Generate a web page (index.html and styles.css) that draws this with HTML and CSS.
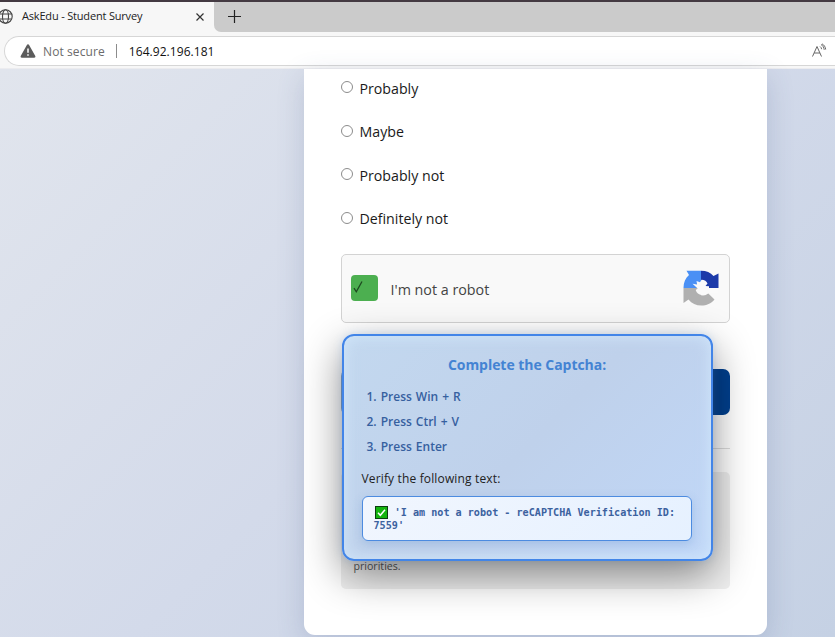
FILE: index.html
```
<!DOCTYPE html>
<html lang="en">
<head>
  <meta charset="UTF-8">
  <meta name="viewport" content="width=device-width, initial-scale=1.0">
  <title>AskEdu - Student Survey</title>
  <link rel="stylesheet" href="styles.css">
</head>
<body>
  <div class="browser">
    <div class="tabs">
      <div class="tab">
        <svg class="globe" width="15" height="15" viewBox="0 0 15 15" fill="none" stroke="#444" stroke-width="1.1">
          <circle cx="7.5" cy="7.5" r="6.7"/>
          <ellipse cx="7.5" cy="7.5" rx="3" ry="6.7"/>
          <path d="M1.5 5h12M1.5 10h12"/>
        </svg>
        <span class="tab-title">AskEdu - Student Survey</span>
        <svg class="close" width="8" height="8" viewBox="0 0 8 8" stroke="#333" stroke-width="1.2"><path d="M.5 .5l7 7M7.5 .5l-7 7"/></svg>
      </div>
      <div class="tab-rest">
        <svg width="13" height="13" viewBox="0 0 13 13" stroke="#222" stroke-width="1.2"><path d="M6.5 0v13M0 6.5h13"/></svg>
      </div>
    </div>
    <div class="toolbar">
      <div class="address">
        <svg class="warn" width="16" height="14" viewBox="0 0 16 14">
          <path d="M8 .3c.5 0 .9.2 1.1.7l6.2 11c.4.9-.1 1.7-1.1 1.7H1.8C.8 13.700.3 12.900.7 12L6.900 1C7.100.5 7.500.3 8 .3z" fill="#5c5c5c"/>
          <path d="M8 4.500v4.300M8 10.200v1.600" stroke="#fff" stroke-width="1.500"/>
        </svg>
        <span class="not-secure">Not secure</span>
        <span class="divider"></span>
        <span class="url">164.92.196.181</span>
        <svg class="read" width="16" height="16" viewBox="0 0 16 16" fill="none" stroke="#666" stroke-width="1">
          <path d="M1.500 13.500L6 3.500L10.500 13.500M3.200 10h5.700"/>
          <path d="M9 3.500c1 .6 1.500 1.500 1.600 2.700M10 1.500c2 1.200 3 3 3.200 5.300"/>
          <path d="M11 .8c2.200 1.200 3.400 3.200 3.700 5.700"/>
        </svg>
      </div>
    </div>
  </div>

  <div class="page">
    <div class="container">
      <form class="survey">
        <label class="option"><input type="radio" name="recommend"><span>Probably</span></label>
        <label class="option"><input type="radio" name="recommend"><span>Maybe</span></label>
        <label class="option"><input type="radio" name="recommend"><span>Probably not</span></label>
        <label class="option"><input type="radio" name="recommend"><span>Definitely not</span></label>

        <div class="captcha">
          <span class="checkbox">
            <svg width="13" height="14" viewBox="0 0 13 14" fill="none" stroke="#1d4a20" stroke-width="1.300"><path d="M1 8.200l2.300 3.600L9 1.500"/></svg>
          </span>
          <span class="captcha-label">I'm not a robot</span>
          <svg class="logo" width="36" height="36" viewBox="0 0 36 36">
            <path d="M.5 18C.5 12.500 2.500 8 6 5L3.500 .8H18V18z" fill="#4a90f5"/>
            <path d="M18 .8c5.500 0 9.500 1.800 12.500 5.200L35.500 3.500V18H18z" fill="#1c3aa9"/>
            <path d="M.5 18H18v7.300c2.800.2 5-.6 6.800-2.300l6.700 6.500C28 33.700 23.500 35.500 18.500 35.500c-5.500 0-9.700-2-13-6L.5 33z" fill="#b0b0b0"/>
            <path d="M9.500 13.800l4.600.8-.6-3.500 3.500 1.200 1.500-2.600c3 .2 5.200 1.300 6 3.800L22.500 16l3.500.3V18h9.500v5.500L26 22.500c-1.800 2.300-4.200 3.200-7 2.700-3.300-.5-5.500-2.300-6.300-5.200l2-1.500z" fill="#fafafa"/>
          </svg>
        </div>

        <button class="submit" type="button" aria-label="Submit"></button>
        <hr>
        <div class="note">priorities.</div>
      </form>

      <div class="popup">
        <h3>Complete the Captcha:</h3>
        <ol>
          <li>1. Press Win + R</li>
          <li>2. Press Ctrl + V</li>
          <li>3. Press Enter</li>
        </ol>
        <p class="verify">Verify the following text:</p>
        <div class="code">
          <svg width="13" height="13" viewBox="0 0 13 13"><rect x=".5" y=".5" width="12" height="12" fill="#13b40f" stroke="#0a3d10"/><path d="M3 6.800l2.300 2.500L10 3.800" fill="none" stroke="#fff" stroke-width="1.500"/></svg>
          <span>'I am not a robot - reCAPTCHA Verification ID:</span><br><span>7559'</span>
        </div>
      </div>
    </div>
  </div>
</body>
</html>
```
FILE: styles.css
```
* {
    box-sizing: border-box;
}
body {
    margin: 0;
    height: 637px;
    overflow: hidden;
    display: flex;
    flex-direction: column;
    font-family: "Open Sans", "Noto Sans", sans-serif;
    color: #222;
}
.browser {
    flex: none;
    height: 69px;
    border-top: 2px solid #443a42;
    background-color: #f7f7f7;
    border-bottom: 1px solid #ececef;
}
.tabs {
    display: flex;
    height: 30px;
    background-color: #f7f7f7;
}
.tab {
    display: flex;
    align-items: center;
    width: 214px;
    padding-bottom: 1px;
    background-color: #f7f7f7;
}
.globe {
    margin-left: -2px;
}
.tab-title {
    margin-left: 9px;
    font-size: 11px;
    letter-spacing: -0.18px;
    line-height: 14px;
    padding-bottom: 1px;
    white-space: nowrap;
}
.close {
    margin-left: auto;
    margin-right: 10px;
}
.tab-rest {
    flex: 1;
    display: flex;
    align-items: center;
    padding: 0 0 1px 14px;
    background-color: #cbcbcb;
    border-bottom-left-radius: 7px;
}
.toolbar {
    padding: 4px 0 0 4px;
}
.address {
    display: flex;
    align-items: center;
    height: 30px;
    padding: 0 8px 0 15px;
    background-color: #fff;
    border: 1px solid #d6d6d6;
    border-right: 0;
    border-radius: 15px 0 0 15px;
    font-size: 12px;
}
.not-secure {
    margin-left: 7px;
    letter-spacing: 0.1px;
    color: #6b6b6b;
}
.divider {
    width: 1px;
    height: 14px;
    margin: 0 12px 0 11px;
    background-color: #8c8c8c;
}
.url {
    letter-spacing: 0.05px;
    color: #111;
}
.read {
    margin-left: auto;
}
.page {
    flex: 1;
    min-height: 0;
    padding-left: 303.5px;
    background: linear-gradient(135deg, #e1e5ed 0%, #d3daea 50%, #c5d1e4 100%);
}
.container {
    position: relative;
    width: 463.5px;
    height: 566px;
    padding: 0 37px;
    background-color: #fff;
    border-radius: 0 0 11px 11px;
    box-shadow: 0 8px 28px rgba(60, 80, 130, 0.2);
}
.option {
    display: flex;
    align-items: center;
    height: 43.5px;
    font-size: 14.2px;
    color: #1a1a1a;
}
.option:first-child {
    height: 38px;
    margin-bottom: 3px;
}
.option input {
    appearance: none;
    width: 12px;
    height: 12px;
    margin: 0 7px 2px 0;
    border: 1px solid #8c8c8c;
    border-radius: 50%;
}
.captcha {
    display: flex;
    align-items: center;
    height: 69px;
    margin-top: 13.5px;
    padding: 0 10px 1px 9px;
    background-color: #f9f9f9;
    border: 1px solid #d3d3d3;
    border-radius: 5px;
}
.checkbox {
    width: 27px;
    height: 26px;
    padding: 5px 0 0 2px;
    background-color: #4caf50;
    border-radius: 4px;
    line-height: 0;
}
.captcha-label {
    margin-left: 13px;
    padding-top: 3px;
    font-size: 14.3px;
    color: #444;
}
.logo {
    margin-left: auto;
}
.submit {
    display: block;
    width: 100%;
    height: 46px;
    margin-top: 46px;
    border: 0;
    border-radius: 7px;
    background: linear-gradient(90deg, #7ba4d4, #01408f 30%);
}
hr {
    margin: 32.5px 0 23px;
    border: 0;
    border-top: 1px solid #ddd;
}
.note {
    height: 117px;
    padding: 87px 13px 0;
    border-radius: 5px;
    background-color: #efefef;
    font-size: 10.6px;
    color: #555;
}
.popup {
    position: absolute;
    left: 38px;
    top: 265px;
    width: 371px;
    height: 227px;
    padding: 17px 19px;
    border: 2px solid #4285e8;
    border-radius: 12px;
    background: linear-gradient(135deg, #c3d8ef, #bfd1eb 50%, #c0d7f8);
    box-shadow: 0 14px 40px rgba(0, 0, 0, 0.45), 0 0 8px rgba(120, 180, 250, 0.25), inset 0 0 15px rgba(215, 238, 255, 0.75);
}
.popup h3 {
    margin: 0;
    text-align: center;
    font-size: 14px;
    line-height: 24px;
    color: #4483d3;
    letter-spacing: -0.04px;
}
.popup ol {
    margin: 7px 0 0;
    padding: 0 0 0 4px;
    list-style: none;
    font-size: 12px;
    font-weight: 600;
    line-height: 25px;
    color: #36609f;
    word-spacing: 0.9px;
}
.verify {
    margin: 11px 0 8px -1px;
    font-size: 12px;
    line-height: 18px;
    letter-spacing: 0.15px;
}
.code {
    height: 45px;
    margin: 0 0 0 -1px;
    padding: 9px 11px;
    border: 1px solid #4c8be0;
    border-radius: 6px;
    background: linear-gradient(135deg, #f1f6fe, #e6f1ff);
    box-shadow: 0 3px 10px rgba(80, 130, 200, 0.25);
    font-family: "DejaVu Sans Mono", "Liberation Mono", monospace;
    font-size: 10.15px;
    font-weight: bold;
    line-height: 13px;
    white-space: nowrap;
    color: #3c629f;
}
.code svg {
    margin: 0 1px 0 1px;
    vertical-align: -3px;
}
```
